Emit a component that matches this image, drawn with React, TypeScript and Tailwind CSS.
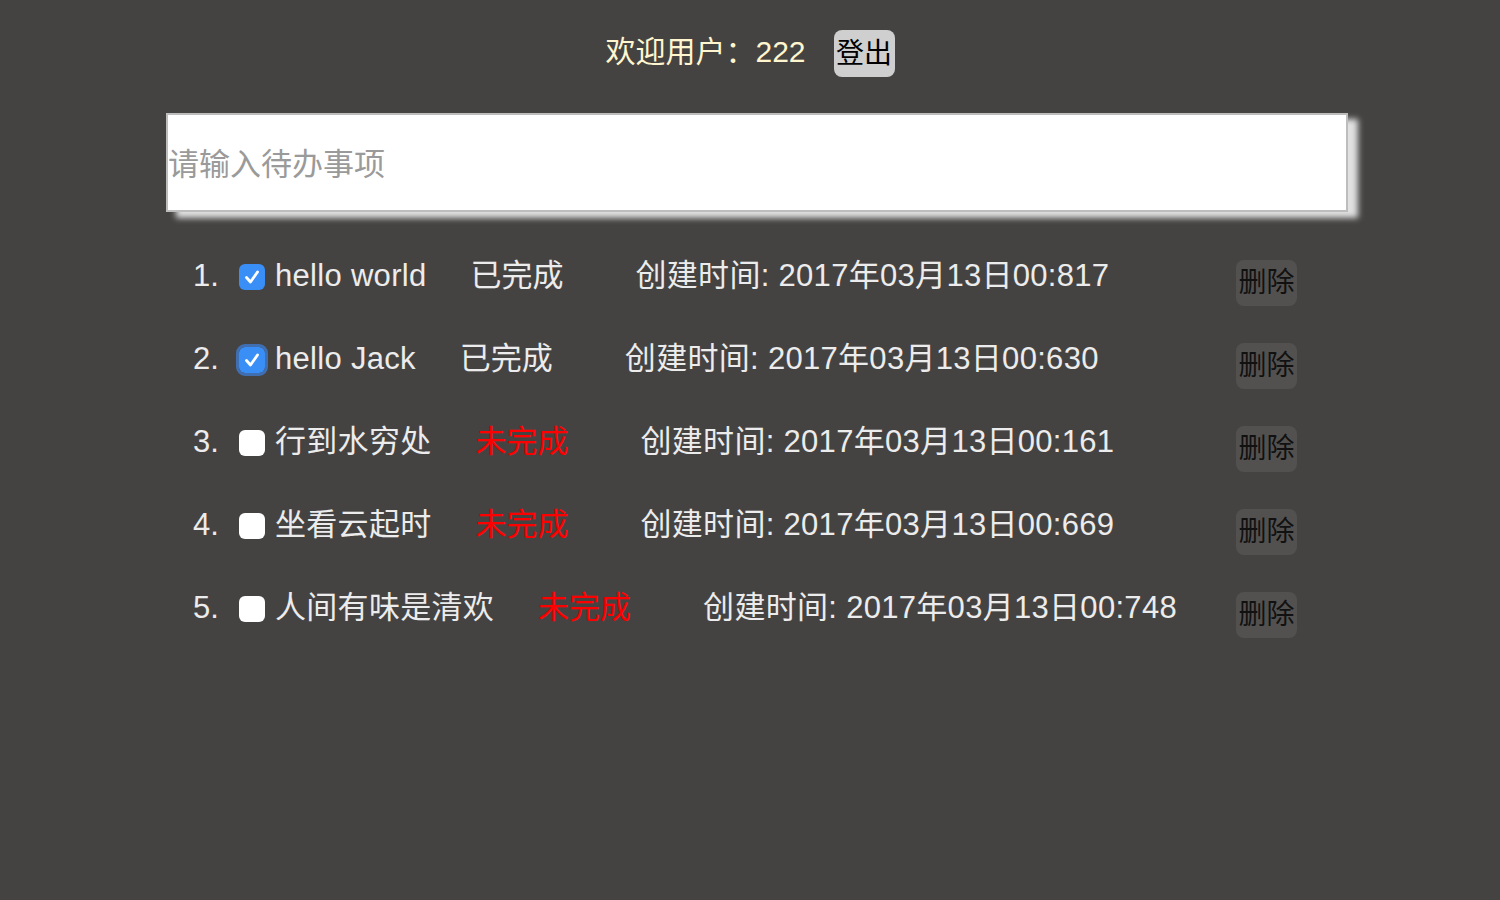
const TODOS = [
  { id: 1, text: 'hello world', done: true, time: '2017年03月13日00:817', focus: false },
  { id: 2, text: 'hello Jack', done: true, time: '2017年03月13日00:630', focus: true },
  { id: 3, text: '行到水穷处', done: false, time: '2017年03月13日00:161', focus: false },
  { id: 4, text: '坐看云起时', done: false, time: '2017年03月13日00:669', focus: false },
  { id: 5, text: '人间有味是清欢', done: false, time: '2017年03月13日00:748', focus: false },
];

const font = "font-['Helvetica','Liberation_Sans','Noto_Sans_CJK_SC',sans-serif]";

const CheckBox = ({ checked, focus }: { checked: boolean; focus: boolean }) => {
  if (!checked) {
    return <span className="inline-block w-[26px] h-[26px] rounded-[6px] bg-white" />;
  }
  return (
    <span
      className={`inline-flex items-center justify-center w-[26px] h-[26px] rounded-[6px] bg-[#3a8ff7] ${
        focus ? 'outline-[3px] outline outline-[#3f6fb0]' : ''
      }`}
    >
      <svg width="20" height="20" viewBox="0 0 20 20" fill="none">
        <path d="M4.5 10.5 L8.5 15 L15.5 5" stroke="white" strokeWidth="2.8" strokeLinecap="round" strokeLinejoin="round" />
      </svg>
    </span>
  );
};

export default function App() {
  return (
    <div className={`min-h-[900px] w-full bg-[#454342] ${font}`}>
      {/* 顶部欢迎 */}
      <div className="flex justify-center items-center pt-[30px] h-[77px]">
        <span className="text-[30px] text-[#fff6cf] leading-none mb-[4px]">欢迎用户：222</span>
        <button className="ml-[28px] w-[61px] h-[47px] rounded-[8px] bg-[#cfcfcf] text-[28px] text-black leading-none flex items-center justify-center">
          登出
        </button>
      </div>

      {/* 输入框 */}
      <div className="pl-[166px] pt-[36px]">
        <input
          className="w-[1182px] h-[99px] bg-white border-2 border-[#bdbdbd] shadow-[10px_6px_6px_#e0e0e0] text-[31px] pl-0 pt-[4px] outline-none placeholder:text-[#9a9a9a]"
          placeholder="请输入待办事项"
        />
      </div>

      {/* 列表 */}
      <ol className="pl-[193px] pr-[203px] pt-[23px]">
        {TODOS.map((item) => (
          <li key={item.id} className="flex items-center h-[83px] text-[31px] text-[#ececec]">
            <span className="w-[46px]">{item.id}.</span>
            <CheckBox checked={item.done} focus={item.focus} />
            <span className="ml-[10px] tracking-[0.3px]">{item.text}</span>
            <span className={`ml-[44px] ${item.done ? 'text-[#ececec]' : 'text-[#ff0000]'}`}>
              {item.done ? '已完成' : '未完成'}
            </span>
            <span className="ml-[72px] tracking-[0.3px]">创建时间: {item.time}</span>
            <button className="ml-auto mt-[12px] w-[61px] h-[46px] rounded-[8px] bg-[#535150] text-[28px] text-[#111] leading-none flex items-center justify-center">
              删除
            </button>
          </li>
        ))}
      </ol>
    </div>
  );
}
